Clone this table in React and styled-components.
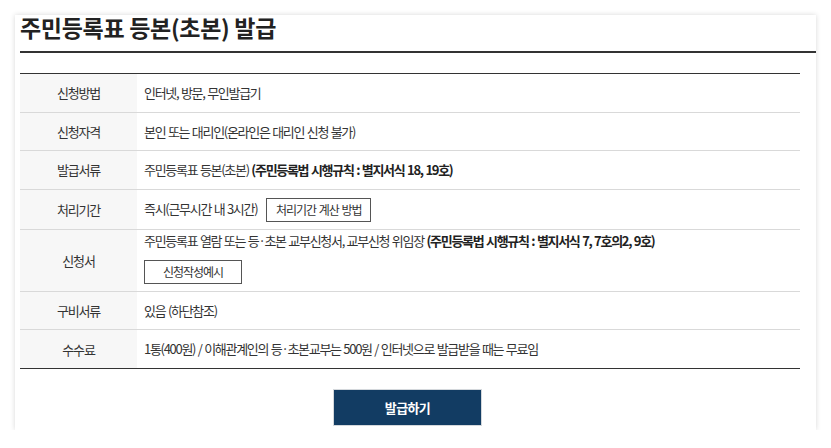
import React from "react";
import styled, { createGlobalStyle } from "styled-components";

const Global = createGlobalStyle`
  html, body { margin: 0; padding: 0; background: #ffffff; }
  body { font-family: "Noto Sans CJK KR", "Noto Sans", sans-serif; color: #333; }
  * { box-sizing: border-box; }
`;

const Page = styled.div`
  padding: 15px 15px 0 15px;
`;

const Card = styled.section`
  background: #fff;
  box-shadow: 0 0 5px rgba(0, 0, 0, 0.16);
  padding: 0 0 4px 5px;
`;

const Title = styled.h2`
  margin: 0;
  font-size: 23px;
  font-weight: 700;
  letter-spacing: -0.3px;
  line-height: 24px;
  color: #222;
  padding-bottom: 12px;
  border-bottom: 2px solid #333;
`;

const Body = styled.div`
  padding-right: 16px;
`;

const Table = styled.div`
  margin-top: 20px;
  border-top: 1px solid #333;
  border-bottom: 1px solid #333;
`;

const Row = styled.div`
  display: grid;
  grid-template-columns: 117px 1fr;
  border-bottom: 1px solid #d9d9d9;
  &:last-child { border-bottom: none; }
`;

const Th = styled.div`
  background: #f7f7f7;
  display: flex;
  align-items: center;
  justify-content: center;
  font-size: 13px;
  letter-spacing: -1.2px;
  color: #333;
`;

const Td = styled.div`
  padding: ${(p) => (p.$tall ? "0 7px 7px" : "7px 7px")};
  font-size: 13px;
  letter-spacing: -1.3px;
  word-spacing: 1px;
  line-height: ${(p) => (p.$tall ? "21px" : "23.5px")};
  color: #333;
`;

const Strong = styled.b`
  font-weight: 700;
  color: #222;
`;

const LineButton = styled.button`
  display: inline-flex;
  align-items: center;
  justify-content: center;
  height: 24px;
  width: ${(p) => p.$w}px;
  margin-left: ${(p) => p.$ml || 0}px;
  padding: 0;
  border: 1px solid #555;
  background: #fff;
  font-family: inherit;
  font-size: 12px;
  letter-spacing: -1px;
  word-spacing: 1px;
  color: #333;
  vertical-align: middle;
  cursor: pointer;
`;

const ButtonBlock = styled.div`
  margin-top: 9px;
  line-height: 0;
`;

const Actions = styled.div`
  display: flex;
  justify-content: center;
  margin-top: 20px;
  padding-right: 5px;
`;

const Primary = styled.button`
  width: 149px;
  height: 37px;
  background: #123c63;
  border: 1px solid #d4d8dc;
  color: #fff;
  font-family: inherit;
  font-size: 13px;
  font-weight: 700;
  letter-spacing: -0.6px;
  cursor: pointer;
`;

export default function App() {
  return (
    <Page>
      <Global />
      <Card>
        <Title>주민등록표 등본(초본) 발급</Title>
        <Body>
          <Table>
            <Row>
              <Th>신청방법</Th>
              <Td>인터넷, 방문, 무인발급기</Td>
            </Row>
            <Row>
              <Th>신청자격</Th>
              <Td>본인 또는 대리인(온라인은 대리인 신청 불가)</Td>
            </Row>
            <Row>
              <Th>발급서류</Th>
              <Td>
                주민등록표 등본(초본) <Strong>(주민등록법 시행규칙 : 별지서식 18, 19호)</Strong>
              </Td>
            </Row>
            <Row>
              <Th>처리기간</Th>
              <Td>
                즉시(근무시간 내 3시간)
                <LineButton $w={105} $ml={9}>처리기간 계산 방법</LineButton>
              </Td>
            </Row>
            <Row>
              <Th>신청서</Th>
              <Td $tall>
                주민등록표 열람 또는 등·초본 교부신청서, 교부신청 위임장{" "}
                <Strong>(주민등록법 시행규칙 : 별지서식 7, 7호의2, 9호)</Strong>
                <ButtonBlock>
                  <LineButton $w={98}>신청작성예시</LineButton>
                </ButtonBlock>
              </Td>
            </Row>
            <Row>
              <Th>구비서류</Th>
              <Td>있음 (하단참조)</Td>
            </Row>
            <Row>
              <Th>수수료</Th>
              <Td>1통(400원) / 이해관계인의 등·초본교부는 500원 / 인터넷으로 발급받을 때는 무료임</Td>
            </Row>
          </Table>
          <Actions>
            <Primary>발급하기</Primary>
          </Actions>
        </Body>
      </Card>
    </Page>
  );
}
